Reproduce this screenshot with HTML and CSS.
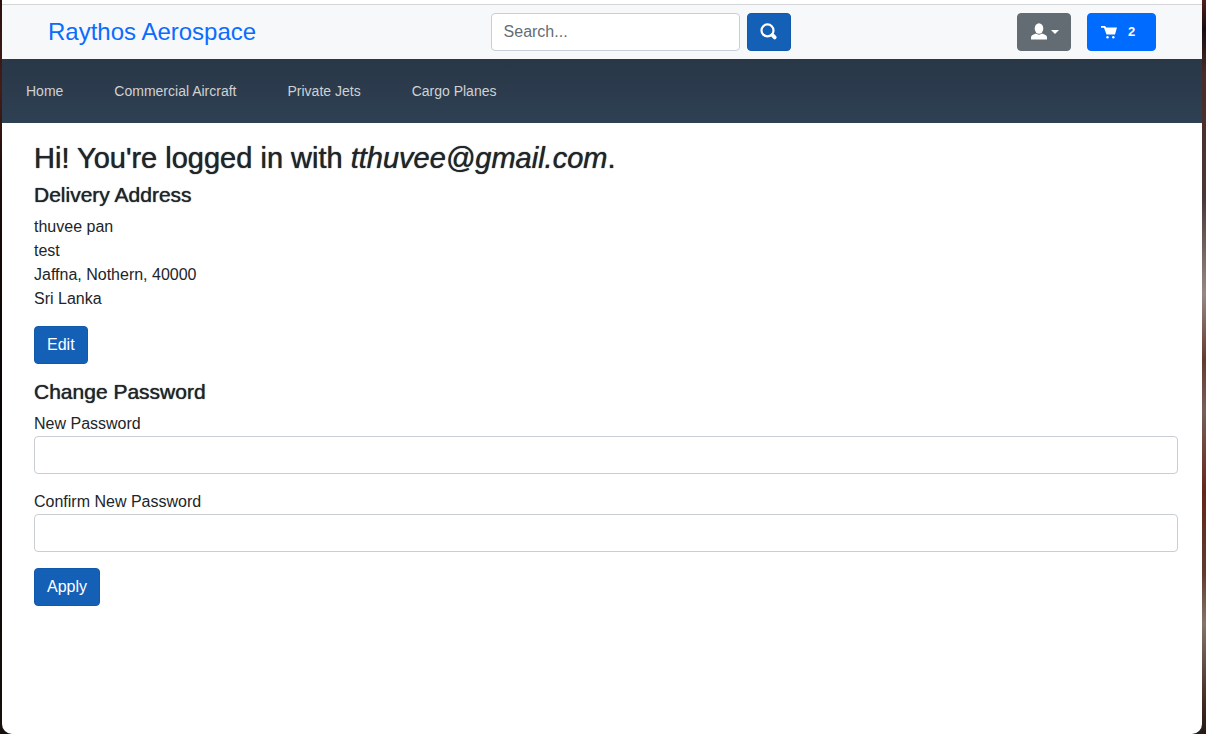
FILE: index.html
```html
<!DOCTYPE html>
<html lang="en">
<head>
<meta charset="utf-8">
<meta name="viewport" content="width=device-width, initial-scale=1">
<title>Raythos Aerospace</title>
<link rel="stylesheet" href="styles.css">
</head>
<body>
<div class="window">
  <header class="header">
    <a class="brand" href="#">Raythos Aerospace</a>
    <form class="search" role="search">
      <input class="field search-field" type="search" placeholder="Search..." aria-label="Search">
      <button class="btn" type="submit" aria-label="Search">
        <svg class="icon" width="18" height="18" viewBox="0 0 18 18" fill="none" stroke="currentColor"><circle cx="7.500" cy="7.400" r="6" stroke-width="2.200"/><path d="M12.500 12.200l2.200 2.200" stroke-width="3.800" stroke-linecap="round"/></svg>
      </button>
    </form>
    <div class="actions">
      <button class="btn btn-account" type="button" aria-label="Account">
        <svg class="icon" width="18" height="18" viewBox="0 0 18 18" fill="currentColor"><ellipse cx="9" cy="5.500" rx="4.300" ry="5.200"/><path d="M1 16.500v-2c0-1.400.9-2.300 2-2.700l3-1.300c1.800 1.500 4.200 1.500 6 0l3 1.300c1.100.4 2 1.300 2 2.700v2z"/></svg>
        <svg class="icon" width="8" height="4" viewBox="0 0 8 4" fill="currentColor"><path d="M0 0h8L4 4z"/></svg>
      </button>
      <button class="btn btn-cart" type="button" aria-label="Cart, 2 items">
        <svg class="icon" width="18" height="18" viewBox="0 0 18 18" fill="currentColor"><path d="M1 3h4l1.300 1.600H17L15 11.500H6.500L4 4.800H1z"/><circle cx="7.500" cy="14.200" r="1.200"/><circle cx="13.300" cy="14.200" r="1.200"/></svg>
        <span class="count">2</span>
      </button>
    </div>
  </header>
  <nav class="nav">
    <a href="#">Home</a>
    <a href="#">Commercial Aircraft</a>
    <a href="#">Private Jets</a>
    <a href="#">Cargo Planes</a>
  </nav>
  <main class="content">
    <h1 class="greeting">Hi! You're logged in with <em>tthuvee@gmail.com</em>.</h1>
    <h2 class="section-title">Delivery Address</h2>
    <address class="address">thuvee pan<br>test<br>Jaffna, Nothern, 40000<br>Sri Lanka</address>
    <button class="btn" type="button">Edit</button>
    <form class="password-form">
      <h2 class="section-title">Change Password</h2>
      <div class="group">
        <label for="new-password">New Password</label>
        <input class="field" id="new-password" type="password" autocomplete="new-password">
      </div>
      <div class="group">
        <label for="confirm-password">Confirm New Password</label>
        <input class="field" id="confirm-password" type="password" autocomplete="new-password">
      </div>
      <button class="btn" type="submit">Apply</button>
    </form>
  </main>
</div>
</body>
</html>
```
FILE: styles.css
```css
* {
  box-sizing: border-box;
}

body {
  display: flex;
  min-height: 100vh;
  margin: 0;
  padding: 0 4px 0 2px;
  background:
    linear-gradient(#521f1b, #160e12 4%, #4a2b28 10%, #493839 27%, #968985 40%, #653b30 49%, #76605c 56%, #672519 67%, #613a30 78%, #83756c 85%, #41291e 96%, #241a16) right / 4px 100% no-repeat,
    linear-gradient(#2b100e, #451c16 12%, #1a0b0a 25%, #050303 60%, #17100d) left / 8px 100% no-repeat,
    #2a1c18;
  color: #212529;
  font: 16px/24px "Liberation Sans", Arial, sans-serif;
}

.window {
  flex: 1;
  min-width: 0;
  padding-top: 4px;
  border-radius: 0 0 10px 10px;
  background: #fff;
}

.header {
  display: flex;
  align-items: center;
  justify-content: space-between;
  padding: 8px 46px;
  border-top: 1px solid #d5d6d7;
  background: #f7f8fa;
}

.brand {
  margin-right: 8px;
  color: #0a6cff;
  font-size: 24px;
  text-decoration: none;
}

.search {
  display: flex;
  gap: 7px;
  width: 300px;
}

.actions {
  display: flex;
  gap: 16px;
}

.field {
  display: block;
  width: 100%;
  height: 38px;
  padding: 6px 12px;
  border: 1px solid #c8ced4;
  border-radius: 4px;
  background: #fff;
  color: #495057;
  font: inherit;
  appearance: none;
}

.field::placeholder {
  color: #636d75;
  opacity: 1;
}

.search-field {
  flex: 1;
  min-width: 0;
}

.btn {
  display: inline-flex;
  align-items: center;
  justify-content: center;
  height: 38px;
  padding: 0 12px;
  border: 1px solid #1159a9;
  border-radius: 4px;
  background: #1560b7;
  color: #fff;
  font: inherit;
  cursor: pointer;
}

.btn-account {
  gap: 3px;
  width: 54px;
  padding: 0;
  border-color: #626c72;
  background: #626c72;
}

.btn-cart {
  gap: 10px;
  width: 69px;
  padding-right: 20px;
  border-color: #006bff;
  background: #006bff;
}

.icon {
  flex: none;
}

.count {
  font-size: 13px;
  font-weight: 700;
}

.nav {
  display: flex;
  gap: 51px;
  padding: 20px 24px;
  background: linear-gradient(#293747, #2e4053);
  font-size: 14px;
}

.nav a {
  color: #d0d1d2;
  text-decoration: none;
}

.content {
  padding: 18px 24px 16px 32px;
}

.greeting,
.section-title {
  margin: 0 0 8px;
  font-weight: 400;
  text-shadow: 0 0 1px currentColor;
}

.greeting {
  font-size: 29px;
  line-height: 34px;
}

.section-title {
  font-size: 21px;
  line-height: 24px;
}

.address {
  margin-bottom: 15px;
  font-style: normal;
}

.password-form {
  margin-top: 16px;
}

.group {
  margin-bottom: 16px;
}

.group label {
  display: block;
}
```
